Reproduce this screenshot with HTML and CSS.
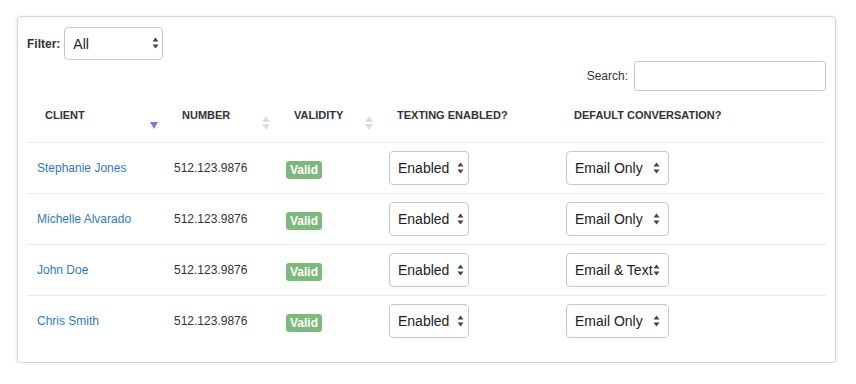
FILE: index.html
```html
<!DOCTYPE html>
<html lang="en">
<head>
  <meta charset="UTF-8" />
  <title>Clients</title>
  <link rel="stylesheet" href="styles.css">
</head>
<body>
  <div class="card">
    <!-- Filter -->
    <div class="filter-row">
      <label class="filter-label">Filter:</label>
      <div class="select-wrap filter-select">
        <select><option>All</option></select>
        <svg class="arrows" width="7" height="12" viewBox="0 0 7 12"><path d="M3.5 0.5 L6.5 4.5 L0.5 4.5 Z M3.5 11.5 L6.5 7.5 L0.5 7.5 Z" fill="#444"/></svg>
      </div>
    </div>

    <!-- Search -->
    <div class="search-row">
      <label>Search:</label>
      <input type="text" class="search-input" />
    </div>

    <table class="clients">
      <thead>
        <tr>
          <th class="col-client">Client<span class="sort-desc"></span></th>
          <th class="col-number">Number<span class="sort-both"><i class="up"></i><i class="down"></i></span></th>
          <th class="col-valid">Validity<span class="sort-both"><i class="up"></i><i class="down"></i></span></th>
          <th class="col-text">Texting Enabled?</th>
          <th class="col-conv">Default Conversation?</th>
        </tr>
      </thead>
      <tbody id="rows"></tbody>
    </table>
  </div>

  <script>
    const clients = [
      { name: "Stephanie Jones", conv: "Email Only" },
      { name: "Michelle Alvarado", conv: "Email Only" },
      { name: "John Doe", conv: "Email & Text" },
      { name: "Chris Smith", conv: "Email Only" }
    ];

    const arrows = '<svg class="arrows" width="7" height="12" viewBox="0 0 7 12"><path d="M3.5 0.5 L6.5 4.5 L0.5 4.5 Z M3.5 11.5 L6.5 7.5 L0.5 7.5 Z" fill="#444"/></svg>';

    function renderRows() {
      const body = document.getElementById("rows");
      clients.forEach(function (c) {
        const tr = document.createElement("tr");
        tr.innerHTML =
          '<td><a href="#">' + c.name + '</a></td>' +
          '<td>512.123.9876</td>' +
          '<td><span class="badge">Valid</span></td>' +
          '<td><div class="select-wrap texting-select"><select><option>Enabled</option><option>Disabled</option></select>' + arrows + '</div></td>' +
          '<td><div class="select-wrap conv-select"><select><option>' + c.conv.replace("&", "&amp;") + '</option></select>' + arrows + '</div></td>';
        body.appendChild(tr);
      });
    }

    renderRows();
  </script>
</body>
</html>
```

FILE: styles.css
```css
body {
  margin: 0;
  padding: 16px 0 0 17px;
  background: #fff;
  font-family: "Liberation Sans", Arial, sans-serif;
  font-size: 12px;
  color: #333;
}
.card {
  width: 819px;
  height: 347px;
  box-sizing: border-box;
  border: 1px solid #d6d6d6;
  border-radius: 4px;
  padding: 10px 9px;
  box-shadow: 0 1px 4px rgba(0,0,0,0.12);
}
.filter-row {
  display: flex;
  align-items: center;
  gap: 4px;
}
.filter-label {
  font-weight: bold;
}
.select-wrap {
  position: relative;
  display: inline-block;
}
.select-wrap select {
  appearance: none;
  -webkit-appearance: none;
  display: block;
  box-sizing: border-box;
  height: 34px;
  width: 100%;
  padding: 0 0 0 8px;
  border: 1px solid #c8c8c8;
  border-radius: 4px;
  background: #fff;
  font-family: "Liberation Sans", Arial, sans-serif;
  font-size: 14px;
  color: #222;
}
.select-wrap .arrows {
  position: absolute;
  top: 11px;
  right: 7px;
  pointer-events: none;
}
.filter-select { width: 99px; }
.filter-select select { height: 33px; }
.filter-select .arrows { right: 4px; top: 10px; }
.texting-select { width: 80px; }
.texting-select .arrows { right: 5px; }
.conv-select { width: 103px; }
.conv-select .arrows { right: 9px; }

.search-row {
  display: flex;
  justify-content: flex-end;
  align-items: center;
  gap: 6px;
  margin-top: 1px;
}
.search-input {
  width: 192px;
  height: 30px;
  box-sizing: border-box;
  border: 1px solid #c8c8c8;
  border-radius: 3px;
}

.clients {
  width: 799px;
  margin-top: 10px;
  border-collapse: collapse;
  table-layout: fixed;
}
.clients th {
  position: relative;
  box-sizing: border-box;
  text-align: left;
  text-transform: uppercase;
  font-size: 11px;
  font-weight: bold;
  line-height: 13px;
  color: #333;
  padding: 8px 18px 20px;
  vertical-align: top;
  border-bottom: 1px solid #ececec;
}
.col-client { width: 137px; }
.col-number { width: 112px; }
.col-valid { width: 103px; }
.col-text { width: 177px; }
.col-conv { width: 270px; }

.sort-desc {
  position: absolute;
  right: 6px;
  bottom: 13px;
  width: 0;
  height: 0;
  border-left: 4px solid transparent;
  border-right: 4px solid transparent;
  border-top: 7px solid #7b7bdc;
}
.sort-both {
  position: absolute;
  right: 6px;
  bottom: 12px;
  display: flex;
  flex-direction: column;
  gap: 2px;
}
.sort-both i {
  display: block;
  width: 0;
  height: 0;
  border-left: 4px solid transparent;
  border-right: 4px solid transparent;
}
.sort-both .up { border-bottom: 6px solid #dcdcdc; }
.sort-both .down { border-top: 6px solid #dcdcdc; }

.clients td {
  height: 51px;
  box-sizing: border-box;
  padding: 0 10px;
  vertical-align: middle;
  border-top: 1px solid #e8edf2;
}
.clients tbody tr:first-child td {
  border-top-color: #ececec;
}
.clients a {
  color: #337ab7;
  text-decoration: none;
}
.badge {
  display: inline-block;
  margin-top: 3px;
  padding: 3px 4px;
  font-size: 12px;
  font-weight: bold;
  line-height: 12px;
  color: #fff;
  background: #7cb97a;
  border-radius: 3px;
}
```
